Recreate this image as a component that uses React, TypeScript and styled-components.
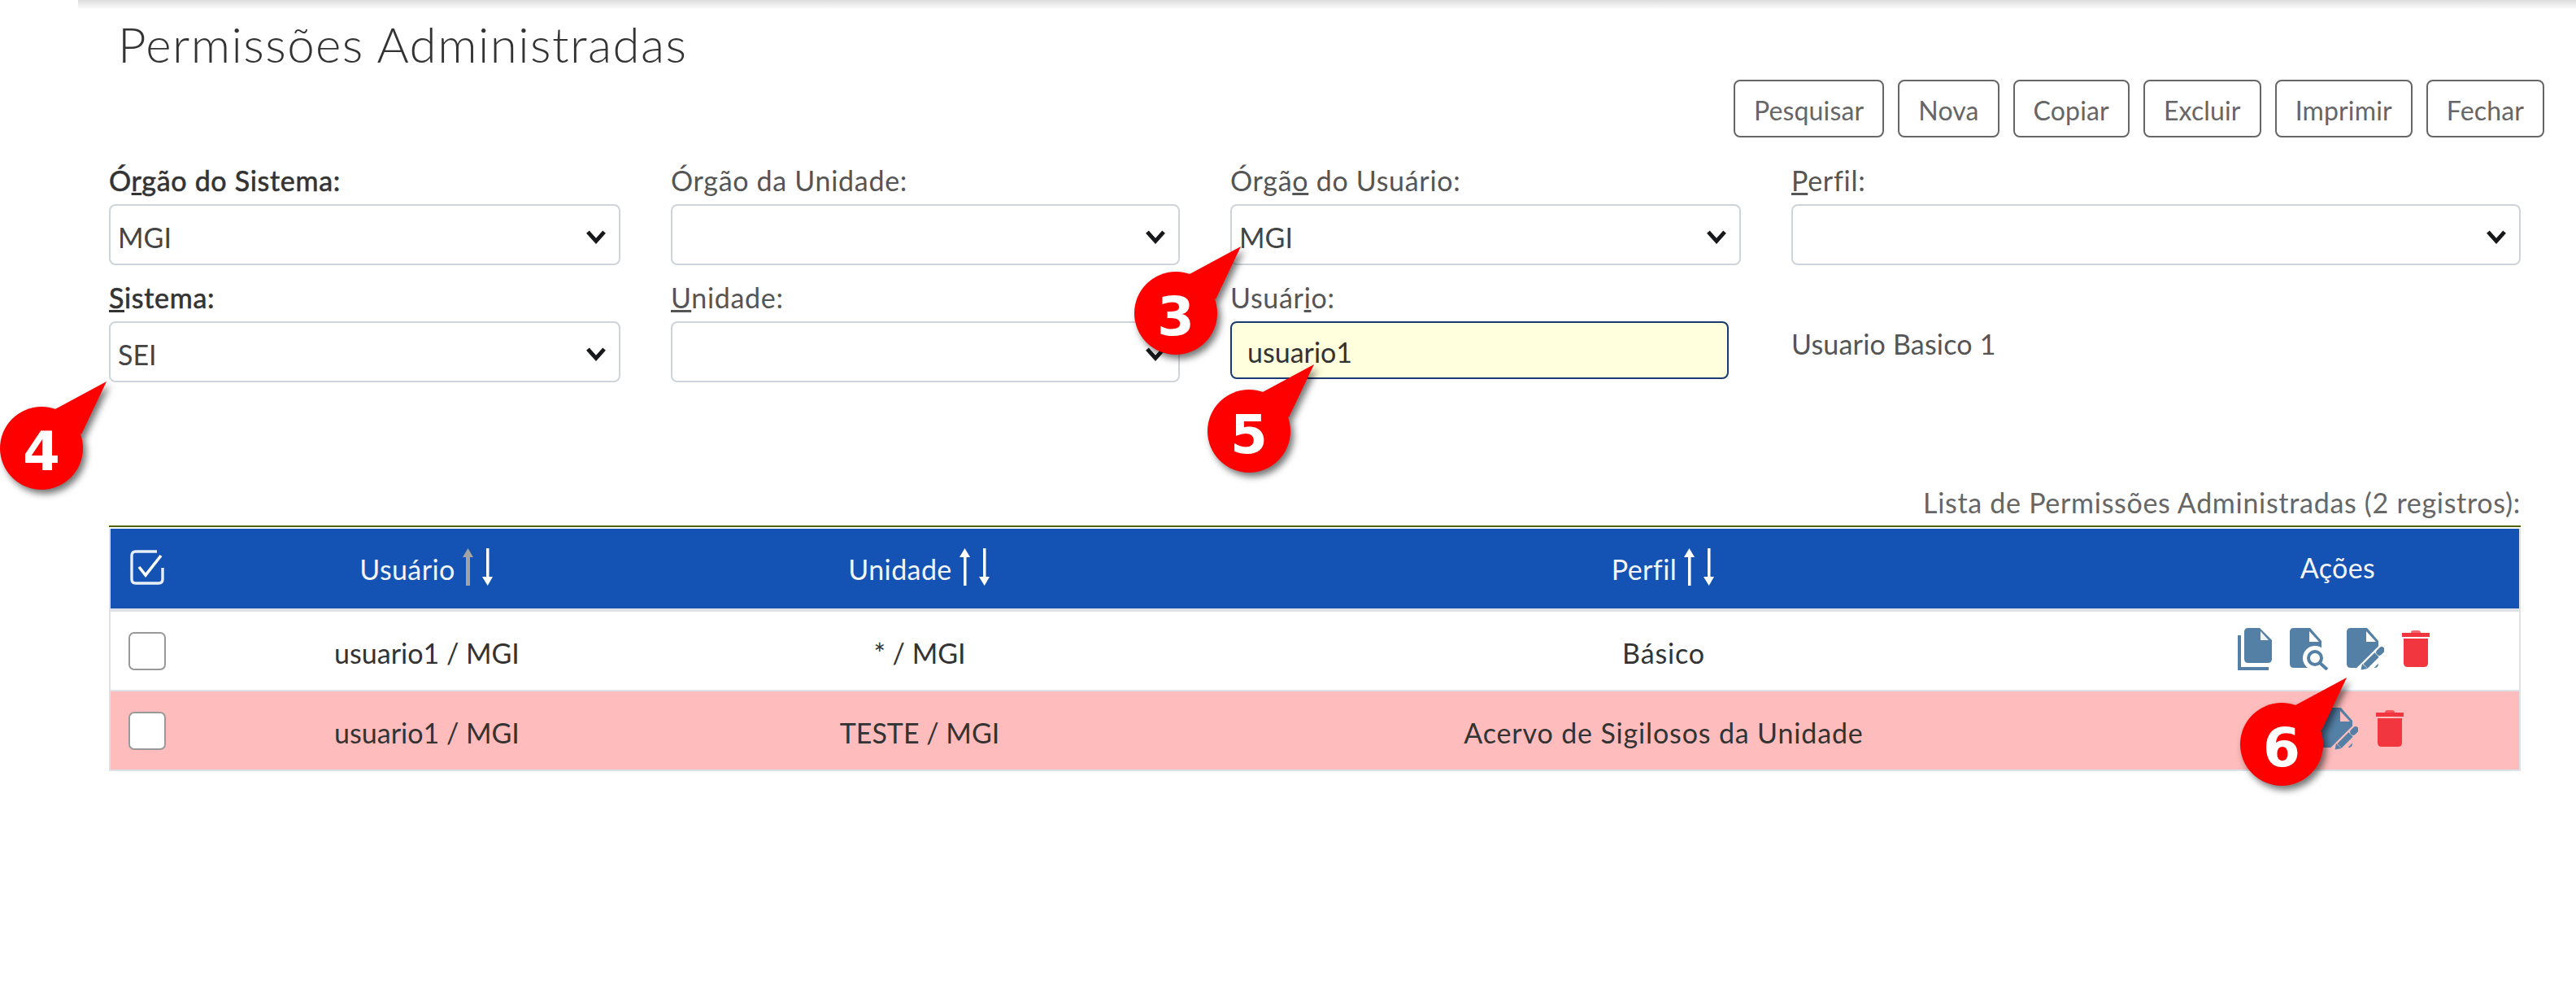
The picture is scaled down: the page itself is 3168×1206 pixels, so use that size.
import React from "react";
import styled, { createGlobalStyle } from "styled-components";

const GlobalStyle = createGlobalStyle`
  html, body {
    margin: 0;
    padding: 0;
    background: #fff;
  }
  body {
    font-family: "Lato", "Liberation Sans", sans-serif;
    color: #444;
  }
`;

const BLUE = "#5480a6";
const RED = "#f2363f";

function Chevron() {
  return (
    <ChevronSvg viewBox="0 0 24 16">
      <path d="M2.5 2 L12 12.5 L21.5 2" fill="none" stroke="#16181b" strokeWidth="4.6" />
    </ChevronSvg>
  );
}

function SortArrows({ dim }: { dim?: boolean }) {
  return (
    <ArrowsSvg viewBox="0 0 40 46">
      <g fill={dim ? "#a3a3a3" : "#fff"}>
        <rect x={dim ? 5 : 6} y="8" width={dim ? 5 : 3.5} height="38" />
        <path d="M7.5 0 L14 11 L1 11 Z" />
      </g>
      <g fill="#fff">
        <rect x="30" y="0" width="3.5" height="38" />
        <path d="M31.7 46 L38 35 L25 35 Z" />
      </g>
    </ArrowsSvg>
  );
}

function HeaderCheck() {
  return (
    <CheckSvg viewBox="0 0 42 43">
      <path
        d="M33 2 H7 Q2 2 2 7 V36 Q2 41 7 41 H35 Q40 41 40 36 V22"
        fill="none"
        stroke="#e8eef8"
        strokeWidth="3.4"
      />
      <path d="M11 21 L19 31 L38 7" fill="none" stroke="#fff" strokeWidth="3.6" />
    </CheckSvg>
  );
}

const docPath =
  "M5 0 H25 L39 16 V44 Q39 49 34 49 H5 Q0 49 0 44 V5 Q0 0 5 0 Z";

function CopyIcon() {
  return (
    <IconSvg width="42" height="52" viewBox="0 0 42 52">
      <path d="M2 9 V50 H38" fill="none" stroke={BLUE} strokeWidth="4" />
      <path d="M13 0 H27 L42 15 V38 Q42 43 37 43 H13 Q8 43 8 38 V5 Q8 0 13 0 Z" fill={BLUE} />
      <path d="M28 4 L38 15 H28 Z" fill="#fff" opacity="0.9" />
    </IconSvg>
  );
}

function SearchDocIcon() {
  return (
    <IconSvg width="48" height="52" viewBox="0 0 48 52">
      <path d={docPath} fill={BLUE} />
      <path d="M24 4 L36 17 H24 Z" fill="var(--cut)" />
      <circle cx="31" cy="37" r="15" fill="var(--cut)" />
      <circle cx="31" cy="37" r="8" fill="none" stroke={BLUE} strokeWidth="4" />
      <path d="M37 43 L46 51" stroke={BLUE} strokeWidth="4" />
    </IconSvg>
  );
}

function EditDocIcon() {
  return (
    <IconSvg width="46" height="52" viewBox="0 0 46 52">
      <path d={docPath} fill={BLUE} />
      <path d="M24 4 L36 17 H24 Z" fill="var(--cut)" />
      <path d="M12 60 L52 20" stroke="var(--cut)" strokeWidth="15" />
      <path d="M23 47 L37 33" stroke={BLUE} strokeWidth="7.5" />
      <path d="M17.5 51.5 L19 44 L25.5 50 Z" fill={BLUE} />
      <path d="M40 30 L43 27" stroke={BLUE} strokeWidth="7.5" strokeLinecap="round" />
    </IconSvg>
  );
}

function TrashIcon() {
  return (
    <IconSvg width="34" height="46" viewBox="0 0 34 46">
      <path d="M11 3 Q11 0 14 0 H20 Q23 0 23 3 Z" fill={RED} opacity="0.75" />
      <rect x="0" y="3" width="34" height="5" fill={RED} />
      <path d="M2 10 H32 V40 Q32 45 27 45 H7 Q2 45 2 40 Z" fill={RED} />
    </IconSvg>
  );
}

function Balloon({ n, x, y }: { n: number; x: number; y: number }) {
  return (
    <BalloonSvg $x={x} $y={y} width="150" height="150" viewBox="0 0 150 150">
      <circle cx="51" cy="83" r="51" fill="#ff0000" />
      <path d="M66 36 L131 1 L100 66 Z" fill="#ff0000" />
      <BalloonDigit x="51" y="110" textAnchor="middle">
        {n}
      </BalloonDigit>
    </BalloonSvg>
  );
}

function App() {
  return (
    <Page>
      <GlobalStyle />
      <TopShade />
      <Title>Permissões Administradas</Title>
      <Toolbar>
        {["Pesquisar", "Nova", "Copiar", "Excluir", "Imprimir", "Fechar"].map((b) => (
          <ToolButton key={b}>{b}</ToolButton>
        ))}
      </Toolbar>

      <FormGrid>
        <Field>
          <Label $strong>
            Ó<u>r</u>gão do Sistema:
          </Label>
          <SelectBox>
            <SelectValue>MGI</SelectValue>
            <Chevron />
          </SelectBox>
        </Field>
        <Field>
          <Label>Órgão da Unidade:</Label>
          <SelectBox>
            <SelectValue />
            <Chevron />
          </SelectBox>
        </Field>
        <Field>
          <Label>
            Órgã<u>o</u> do Usuário:
          </Label>
          <SelectBox>
            <SelectValue>MGI</SelectValue>
            <Chevron />
          </SelectBox>
        </Field>
        <Field>
          <Label>
            <u>P</u>erfil:
          </Label>
          <SelectBox>
            <SelectValue />
            <Chevron />
          </SelectBox>
        </Field>

        <Field>
          <Label $strong>
            <u>S</u>istema:
          </Label>
          <SelectBox>
            <SelectValue>SEI</SelectValue>
            <Chevron />
          </SelectBox>
        </Field>
        <Field>
          <Label>
            <u>U</u>nidade:
          </Label>
          <SelectBox>
            <SelectValue />
            <Chevron />
          </SelectBox>
        </Field>
        <Field>
          <Label>
            Usuár<u>i</u>o:
          </Label>
          <UserInput>usuario1</UserInput>
        </Field>
        <UserName>Usuario Basico 1</UserName>
      </FormGrid>

      <Caption>Lista de Permissões Administradas (2 registros):</Caption>
      <GreenRule />
      <Table>
        <HeadRow>
          <HeadCell>
            <HeaderCheck />
          </HeadCell>
          <HeadCell>
            Usuário <SortArrows dim />
          </HeadCell>
          <HeadCell>
            Unidade <SortArrows />
          </HeadCell>
          <HeadCell>
            Perfil <SortArrows />
          </HeadCell>
          <ActionsHead>Ações</ActionsHead>
        </HeadRow>
        <BodyRow>
          <Cell>
            <RowCheck />
          </Cell>
          <Cell>usuario1 / MGI</Cell>
          <Cell>* / MGI</Cell>
          <ProfileCell>Básico</ProfileCell>
          <ActionsCell>
            <CopyIcon />
            <SearchDocIcon />
            <EditDocIcon />
            <TrashIcon />
          </ActionsCell>
        </BodyRow>
        <BodyRow $danger>
          <Cell>
            <RowCheck />
          </Cell>
          <Cell>usuario1 / MGI</Cell>
          <Cell>TESTE / MGI</Cell>
          <ProfileCell>Acervo de Sigilosos da Unidade</ProfileCell>
          <ActionsCell>
            <SearchDocIcon />
            <EditDocIcon />
            <TrashIcon />
          </ActionsCell>
        </BodyRow>
      </Table>

      <Balloon n={3} x={1395} y={302} />
      <Balloon n={4} x={0} y={468} />
      <Balloon n={5} x={1485} y={447} />
      <Balloon n={6} x={2755} y={832} />
    </Page>
  );
}

const Page = styled.div`
  position: relative;
  width: 3168px;
  height: 1206px;
  overflow: hidden;
  background: #fff;
  padding: 0 68px 0 134px;
  box-sizing: border-box;
`;

const TopShade = styled.div`
  height: 12px;
  margin-left: -38px;
  margin-right: -68px;
  background: linear-gradient(#dcdcdc, #ffffff);
`;

const Title = styled.h1`
  margin: 10px 0 0 11px;
  font-size: 60px;
  line-height: 64px;
  font-weight: 300;
  letter-spacing: 1.45px;
  color: #333;
`;

const Toolbar = styled.div`
  display: flex;
  justify-content: flex-end;
  gap: 17px;
  margin: 12px -29px 0 0;
`;

const ToolButton = styled.button`
  height: 71px;
  padding: 4px 23px 0;
  border: 2px solid #666;
  border-radius: 8px;
  background: #fff;
  color: #666;
  font-family: inherit;
  font-size: 32px;
  letter-spacing: 0.15px;
`;

const FormGrid = styled.div`
  display: grid;
  grid-template-columns: 629px 626px 628px 897px;
  column-gap: 62px;
  row-gap: 19px;
  margin-top: 32px;
`;

const Field = styled.div`
  display: flex;
  flex-direction: column;
  gap: 6px;
`;

const Label = styled.label<{ $strong?: boolean }>`
  height: 44px;
  line-height: 42px;
  font-size: 34px;
  letter-spacing: 0.7px;
  color: ${(p) => (p.$strong ? "#333" : "#555")};
  -webkit-text-stroke: ${(p) => (p.$strong ? "0.6px #333" : "0")};
`;

const SelectBox = styled.div`
  height: 75px;
  box-sizing: border-box;
  display: flex;
  align-items: center;
  justify-content: space-between;
  padding: 0 15px 0 9px;
  border: 2px solid #ced4da;
  border-radius: 8px;
  background: #fff;
`;

const SelectValue = styled.span`
  font-size: 34px;
  color: #444;
  padding-top: 6px;
`;

const ChevronSvg = styled.svg`
  width: 26px;
  height: 17px;
  margin-top: 6px;
`;

const UserInput = styled.div`
  width: 613px;
  height: 71px;
  box-sizing: border-box;
  padding: 4px 19px 0;
  display: flex;
  align-items: center;
  border: 2px solid #1a3a70;
  border-radius: 8px;
  background: #ffffdd;
  font-size: 34px;
  color: #333;
`;

const UserName = styled.div`
  align-self: center;
  padding-top: 30px;
  font-size: 34px;
  letter-spacing: 0.2px;
  color: #555;
`;

const Caption = styled.div`
  margin-top: 128px;
  height: 40px;
  line-height: 40px;
  text-align: right;
  font-size: 34px;
  letter-spacing: 0.7px;
  color: #666;
`;

const GreenRule = styled.div`
  height: 2px;
  margin-top: 8px;
  background: #4f6200;
`;

const Table = styled.div`
  margin-top: 2px;
  border: solid #dee2e6;
  border-width: 0 2px 2px;
`;

const columns = "92px 594px 618px 1212px 1fr";

const HeadRow = styled.div`
  display: grid;
  grid-template-columns: ${columns};
  height: 98px;
  background: #1452b3;
  border-bottom: 4px solid #dee2e6;
`;

const HeadCell = styled.div`
  display: flex;
  align-items: center;
  justify-content: center;
  gap: 8px;
  color: #f2f6fc;
  font-size: 34px;
  letter-spacing: 0.4px;
`;

const ActionsHead = styled(HeadCell)`
  margin-top: -4px;
`;

const BodyRow = styled.div<{ $danger?: boolean }>`
  display: grid;
  grid-template-columns: ${columns};
  height: 96px;
  background: ${(p) => (p.$danger ? "#ffbcbc" : "#fff")};
  --cut: ${(p) => (p.$danger ? "#ffbcbc" : "#fff")};
  & + & {
    border-top: 2px solid #dee2e6;
  }
`;

const Cell = styled.div`
  display: flex;
  align-items: center;
  justify-content: center;
  padding-top: 4px;
  font-size: 34px;
  color: #333;
`;

const ProfileCell = styled(Cell)`
  letter-spacing: 0.85px;
`;

const ActionsCell = styled(Cell)`
  gap: 22px;
  padding: 0 10px 0 0;
  margin-top: -4px;
`;

const RowCheck = styled.span`
  width: 46px;
  height: 47px;
  box-sizing: border-box;
  margin: -4px 0 0 -2px;
  border: 2px solid #999;
  border-radius: 7px;
  background: #fff;
`;

const ArrowsSvg = styled.svg`
  width: 40px;
  height: 46px;
  margin-top: -4px;
`;

const CheckSvg = styled.svg`
  width: 42px;
  height: 43px;
  margin: -4px 0 0 -2px;
`;

const IconSvg = styled.svg`
  flex: none;
`;

const BalloonSvg = styled.svg<{ $x: number; $y: number }>`
  position: absolute;
  left: ${(p) => p.$x}px;
  top: ${(p) => p.$y}px;
  overflow: visible;
  filter: drop-shadow(4px 5px 4px rgba(0, 0, 0, 0.55));
`;

const BalloonDigit = styled.text`
  font-family: "DejaVu Sans", sans-serif;
  font-weight: 700;
  font-size: 66px;
  fill: #fff;
`;

export default App;
